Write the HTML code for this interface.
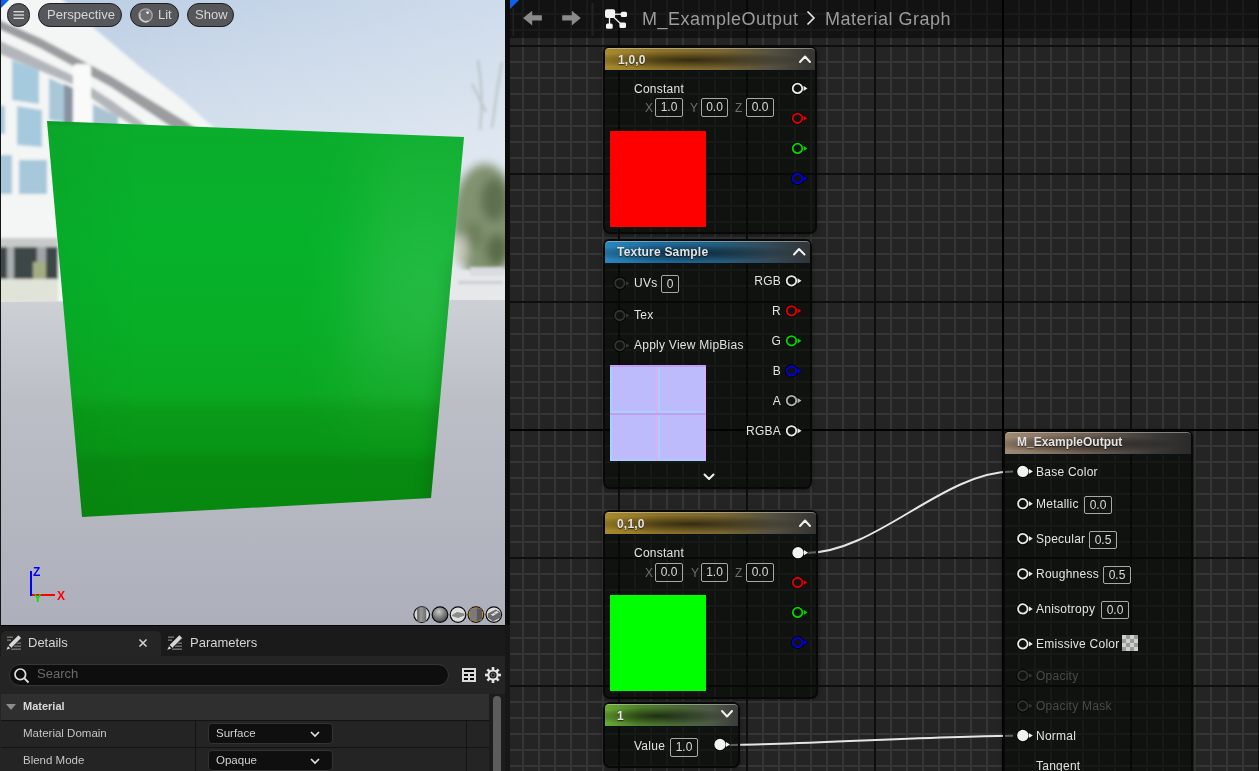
<!DOCTYPE html>
<html><head><meta charset="utf-8">
<style>
*{margin:0;padding:0;box-sizing:border-box}
html,body{width:1259px;height:771px;overflow:hidden;background:#0c0c0c;font-family:"Liberation Sans",sans-serif}
body>*{will-change:transform}
.a{position:absolute}
#vp{position:absolute;left:0;top:0;width:505px;height:625px;overflow:hidden;background:#c9d6e4}
#graph{position:absolute;left:510px;top:0;width:749px;height:771px;overflow:hidden;background-color:#242424;
background-image:
linear-gradient(to right,#0e0e0e 2px,transparent 2px),
linear-gradient(to bottom,#0e0e0e 2px,transparent 2px),
linear-gradient(to right,#353535 2px,transparent 2px),
linear-gradient(to bottom,#353535 2px,transparent 2px);
background-size:128px 771px,749px 128px,16px 771px,749px 16px;
background-position:108px 0,0 45px,12px 0,0 13px;
}
#details{position:absolute;left:0;top:625px;width:510px;height:146px;background:#1a1a1a;overflow:hidden}
#tb{position:absolute;left:0;top:0;width:749px;height:38px;background:rgba(0,0,0,0.5)}
.crumb{position:absolute;top:9px;font-size:18px;letter-spacing:0.5px;color:#9c9c9c;white-space:nowrap}
.pill{position:absolute;top:3px;height:24px;border-radius:12px;background:#56575a;border:1px solid #1e1e1f;color:#d6d6d6;font-size:13px;line-height:22px;white-space:nowrap}
.nd{position:absolute;border-radius:5px;background:rgba(3,7,3,0.6);box-shadow:0 0 0 2px #080808,0 1px 4px 2px rgba(0,0,0,0.35)}
.hd{position:absolute;left:0;right:0;top:0;height:23px;border-radius:4px 4px 0 0;border-bottom:1px solid #08111c;overflow:hidden}
.hd:after{content:"";position:absolute;left:0;top:0;right:0;bottom:0;background:radial-gradient(ellipse 55% 40% at 40% 55%,rgba(0,0,0,0.6),rgba(0,0,0,0) 100%);}
.hd:before{content:"";position:absolute;left:0;top:0;right:0;height:6px;border-radius:4px 4px 0 0;border-top:1.5px solid rgba(225,225,225,0.45);z-index:1}
.ht{position:absolute;top:3px;font-weight:bold;font-size:12px;letter-spacing:0.2px;color:#e4e4e4;z-index:2;white-space:nowrap;text-shadow:0 1px 1px rgba(0,0,0,.6)}
.gold{background:linear-gradient(to right,#a88a2c 0%,#8c7226 25%,#7a6630 55%,#545040 80%,#343432 100%)}
.blue{background:linear-gradient(to right,#2a86bc 0%,#1d6a9a 25%,#235e80 55%,#334a58 80%,#303436 100%)}
.grn{background:linear-gradient(to right,#6aa834 0%,#4e8028 25%,#4a6836 55%,#4e5a46 80%,#3a3c3a 100%)}
.brn{background:linear-gradient(to right,#a08a74 0%,#86735f 25%,#5e544a 55%,#3c3a38 80%,#2a2a2a 100%)}
.t{position:absolute;font-size:12px;letter-spacing:0.25px;color:#e2e2e2;white-space:nowrap}
.bx{position:absolute;border:1px solid #a8a8a8;border-radius:2px;font-size:12px;color:#d8d8d8;text-align:center;line-height:16px}
.gl{position:absolute;font-size:12px;color:#6e6e6e}
</style></head><body>
<div id="vp">
<svg class="a" style="left:0;top:0" width="505" height="625" viewBox="0 0 505 625">
<defs>
 <linearGradient id="sky" x1="0" y1="0" x2="0" y2="1">
  <stop offset="0" stop-color="#b9cce3"/>
  <stop offset="0.45" stop-color="#d0dcea"/>
  <stop offset="1" stop-color="#e3e8ee"/>
 </linearGradient>
 <linearGradient id="skyx" x1="0" y1="0" x2="1" y2="0">
  <stop offset="0" stop-color="#ffffff" stop-opacity="0"/>
  <stop offset="1" stop-color="#ffffff" stop-opacity="0.3"/>
 </linearGradient>
 <linearGradient id="gnd" x1="0" y1="0" x2="0" y2="1">
  <stop offset="0" stop-color="#cdd0d5"/>
  <stop offset="0.3" stop-color="#bcbfc6"/>
  <stop offset="1" stop-color="#adb0bb"/>
 </linearGradient>
 <linearGradient id="grn" gradientUnits="userSpaceOnUse" x1="0" y1="121" x2="0" y2="517">
  <stop offset="0" stop-color="#08a026"/>
  <stop offset="0.015" stop-color="#0aad2c"/>
  <stop offset="0.33" stop-color="#06b22a"/>
  <stop offset="0.53" stop-color="#07ae26"/>
  <stop offset="0.69" stop-color="#0aa821"/>
  <stop offset="0.735" stop-color="#099b18"/>
  <stop offset="0.826" stop-color="#089616"/>
  <stop offset="0.861" stop-color="#078b11"/>
  <stop offset="1" stop-color="#07870f"/>
 </linearGradient>
 <radialGradient id="sheen" gradientUnits="userSpaceOnUse" cx="440" cy="270" r="150" gradientTransform="translate(440 270) scale(0.6 1.3) translate(-440 -270)">
  <stop offset="0" stop-color="#ffffff" stop-opacity="0.09"/>
  <stop offset="0.6" stop-color="#ffffff" stop-opacity="0.05"/>
  <stop offset="1" stop-color="#ffffff" stop-opacity="0"/>
 </radialGradient>
 <linearGradient id="grnx" gradientUnits="userSpaceOnUse" x1="47" y1="0" x2="140" y2="0">
  <stop offset="0" stop-color="#000" stop-opacity="0.04"/>
  <stop offset="1" stop-color="#000" stop-opacity="0"/>
 </linearGradient>
 <filter id="bl" x="-20%" y="-20%" width="140%" height="140%"><feGaussianBlur stdDeviation="1.7"/></filter>
 <linearGradient id="shv" gradientUnits="userSpaceOnUse" x1="0" y1="135" x2="0" y2="450"><stop offset="0" stop-color="#fff" stop-opacity="0.04"/><stop offset="0.55" stop-color="#fff" stop-opacity="0.13"/><stop offset="1" stop-color="#fff" stop-opacity="0"/></linearGradient>
 <filter id="bl4" x="-50%" y="-50%" width="200%" height="200%"><feGaussianBlur stdDeviation="28"/></filter>
 <filter id="bl5" x="-50%" y="-50%" width="200%" height="200%"><feGaussianBlur stdDeviation="7"/></filter>
 <filter id="bl3" x="-50%" y="-50%" width="200%" height="200%"><feGaussianBlur stdDeviation="14"/></filter>
 <filter id="bl2" x="-20%" y="-20%" width="140%" height="140%"><feGaussianBlur stdDeviation="5"/></filter>
</defs>
<rect x="0" y="0" width="505" height="302" fill="url(#sky)"/>
<rect x="0" y="0" width="505" height="302" fill="url(#skyx)"/>
<!-- building -->
<g filter="url(#bl)">
 <polygon points="-10,-10 52,-10 94,28 140,67 183,100 205,120 235,146 235,305 -10,305" fill="#f4f5f5"/>
 <polygon points="-10,16 40,38 111,76 183,120 200,131 180,133 161,120 111,87 40,48 -10,25" fill="#9a9c9f"/>
 <polygon points="-10,36 0,40.7 72,75 111,100 150,128 150,136 111,112 72,84 0,54 -10,49" fill="#b2b6ba"/>
 <polygon points="12,60 39,70 39,104 12,100" fill="#a6cadd"/>
 <polygon points="49,78 64,85 64,122 49,120" fill="#a8c8d8"/>
 <polygon points="64,84 73,88 73,130 64,130" fill="#8793a0"/>
 <rect x="73" y="64" width="18" height="70" rx="4" fill="#fafafa"/>
 <polygon points="93,104 118,116 118,130 93,130" fill="#a9c3d2"/>
 <polygon points="17,106 42,110 42,147 17,145" fill="#a6cadd"/>
 <polygon points="-10,104 5,106 5,134 -10,133" fill="#a6cadd"/>
 <rect x="-10" y="155" width="22" height="39" fill="#a6c8da"/>
 <rect x="19" y="160" width="28" height="34" fill="#a6c8da"/>
 <rect x="-10" y="238" width="68" height="9" fill="#c8cac9"/>
 <rect x="-10" y="247" width="68" height="32" fill="#3c4646"/>
 <rect x="7" y="247" width="7" height="32" fill="#a9aeae"/>
 <rect x="37" y="247" width="9" height="32" fill="#a0a6a6"/>
 <rect x="33" y="262" width="13" height="18" fill="#a4ac84"/>
 <rect x="-10" y="279" width="68" height="24" fill="#dfe3d8"/>
</g>
<!-- trees right -->
<g filter="url(#bl)" opacity="0.3">
 <path d="M480,130 Q484,95 478,60 M492,128 Q496,95 502,62 M486,112 L472,84" stroke="#7f8a7a" stroke-width="2.5" fill="none"/>
</g>
<g filter="url(#bl2)">
 <ellipse cx="485" cy="222" rx="33" ry="58" fill="#809270"/>
 <ellipse cx="494" cy="200" rx="13" ry="22" fill="#5f7050"/>
 <ellipse cx="474" cy="235" rx="9" ry="14" fill="#6e805a"/>
 <ellipse cx="497" cy="250" rx="11" ry="16" fill="#5c6c4a"/>
 <ellipse cx="461" cy="250" rx="7" ry="16" fill="#c2c7b8"/>
</g>
<g filter="url(#bl)">
 <rect x="449" y="270" width="62" height="31" fill="#e6e8ea"/>
 <rect x="470" y="267" width="34" height="9" fill="#d9dce0"/>
 <rect x="458" y="281" width="45" height="3" fill="#c8ccd0"/>
</g>
<!-- ground -->
<path d="M0,302 Q250,299 505,300 L505,625 L0,625 Z" fill="url(#gnd)"/>
<!-- green plane -->
<polygon points="47,121 464,137 431,498 82,517" fill="url(#grn)"/>
<polygon points="47,121 464,137 431,498 82,517" fill="url(#grnx)"/>
<clipPath id="pc"><polygon points="47,121 464,137 431,498 82,517"/></clipPath>
<g clip-path="url(#pc)"><polygon points="370,120 500,120 470,460 345,460" fill="url(#shv)" filter="url(#bl4)"/><polygon points="452,260 475,260 450,520 422,520" fill="#003a00" opacity="0.18" filter="url(#bl5)"/></g>
<!-- axis gizmo -->
<rect x="30" y="571" width="2" height="25" fill="#0000ff"/>
<rect x="32" y="594" width="23" height="2" fill="#ff0000"/>
<text x="33" y="576" font-family="Liberation Sans" font-size="12" font-weight="bold" fill="#0000ff">Z</text>
<text x="57" y="600" font-family="Liberation Sans" font-size="12" font-weight="bold" fill="#ff0000">X</text>
<text x="34" y="602" font-family="Liberation Sans" font-size="11" font-weight="bold" fill="#00e000">Y</text>
</svg>
<div class="a" style="left:0;top:0;width:1px;height:625px;background:#151515"></div>
<div class="pill" style="left:7px;width:23px"></div>
<svg class="a" style="left:12px;top:9px" width="14" height="12" viewBox="0 0 14 12"><g fill="#d8d8d8"><rect x="1.5" y="2" width="10.5" height="1.4"/><rect x="1.5" y="5.3" width="10.5" height="1.4"/><rect x="1.5" y="8.6" width="10.5" height="1.4"/></g></svg>
<div class="pill" style="left:38px;width:84px;padding-left:8px">Perspective</div>
<div class="pill" style="left:130px;width:49px;padding-left:27px">Lit</div>
<svg class="a" style="left:137px;top:7px" width="17" height="17" viewBox="0 0 17 17">
 <circle cx="8.6" cy="8.4" r="6.6" fill="#6e6e6e" stroke="#a8a8a8" stroke-width="1.3"/>
 <path d="M3.2,6.5 A6,6 0 0 0 11.5,14" fill="none" stroke="#d0d0d0" stroke-width="1.4"/>
 <circle cx="10.6" cy="5.6" r="1.4" fill="#e8e8e8"/>
</svg>
<div class="pill" style="left:187px;width:47px;padding-left:7px">Show</div>
<svg class="a" style="left:410px;top:603px" width="95" height="23" viewBox="0 0 95 23">
 <defs>
  <radialGradient id="sph" cx="0.42" cy="0.3" r="0.75"><stop offset="0" stop-color="#c8c8c8"/><stop offset="0.6" stop-color="#777"/><stop offset="1" stop-color="#4a4a4a"/></radialGradient>
  <linearGradient id="cyl" x1="0" x2="1"><stop offset="0" stop-color="#5a5a5a"/><stop offset="0.4" stop-color="#9a9a9a"/><stop offset="1" stop-color="#6a6a6a"/></linearGradient>
 </defs>
 <g transform="translate(11.7 11.6)"><circle r="8.4" fill="#0a0a0a"/><circle r="7.2" fill="#d9d9d9"/><rect x="-4.5" y="-7.2" width="9" height="14.4" fill="url(#cyl)"/></g>
 <g transform="translate(30 11.6)"><circle r="8.4" fill="#0a0a0a"/><circle r="7.2" fill="url(#sph)"/></g>
 <g transform="translate(48 11.6)"><circle r="8.4" fill="#0a0a0a"/><circle r="7.2" fill="#dedede"/><path d="M-6,0.5 L-1,-2.5 L6.5,-1 L6.5,1 L0,3.5 L-6,1.5Z" fill="#8a8a8a"/></g>
 <g transform="translate(65.9 11.6)"><circle r="8.4" fill="#0a0a0a"/><circle r="7.4" fill="#d08a1a"/><circle r="6.2" fill="#4a6a80"/><path d="M-6,-6 L6,-6 L6,6 L-6,6Z" fill="#7a7a7a"/><path d="M1,-6 L1,7 L6,4 L6,-6Z" fill="#5a5a5a"/></g>
 <g transform="translate(83.8 11.6)"><circle r="8.4" fill="#0a0a0a"/><circle r="7.2" fill="#dcdcdc"/><path d="M-6,-1 L2,-5 L7,-2 L7,3 L-1,7 L-6,3Z" fill="#6a6a6a"/><path d="M0,-2 L3,-3.5 L5,-2 L2,-0.5Z M-3,0 L0,-1.5 L2,0 L-1,1.5Z" fill="#ddd"/></g>
</svg>
</div>
<div id="details">
 <div class="a" style="left:505px;top:0;width:5px;height:146px;background:#171717"></div>
 <div class="a" style="left:0;top:0;width:505px;height:1px;background:#050505"></div>
 <div class="a" style="left:1px;top:6px;width:160px;height:25px;background:#252525;border-radius:5px 5px 0 0"></div>
 <div class="a" style="left:0;top:31px;width:505px;height:115px;background:#242424"></div>
 <svg class="a" style="left:5px;top:9px" width="18" height="18" viewBox="0 0 18 18">
  <g fill="#7a7a7a"><rect x="2" y="2.5" width="6" height="1.3"/><rect x="2" y="5.5" width="4" height="1.3"/><rect x="10" y="8.5" width="6" height="1.3"/><rect x="9" y="11.5" width="7" height="1.3"/><rect x="6" y="14.5" width="10" height="1.3"/></g>
  <path d="M13.4,0.8 L16.6,4 L6.4,14.2 L3.2,11 Z" fill="#d8d8d8" stroke="#111" stroke-width="0.9"/>
  <path d="M2.8,11.6 L5.8,14.6 L0.8,16.4 Z" fill="#d8d8d8" stroke="#111" stroke-width="0.7"/>
 </svg>
 <div class="a" style="left:28px;top:10px;font-size:13px;color:#d4d4d4">Details</div>
 <svg class="a" style="left:138px;top:13px" width="10" height="10" viewBox="0 0 10 10"><path d="M1.5,1.5 L8.5,8.5 M8.5,1.5 L1.5,8.5" stroke="#d0d0d0" stroke-width="1.6"/></svg>
 <svg class="a" style="left:166px;top:9px" width="18" height="18" viewBox="0 0 18 18">
  <g fill="#7a7a7a"><rect x="2" y="2.5" width="6" height="1.3"/><rect x="2" y="5.5" width="4" height="1.3"/><rect x="10" y="8.5" width="6" height="1.3"/><rect x="9" y="11.5" width="7" height="1.3"/><rect x="6" y="14.5" width="10" height="1.3"/></g>
  <path d="M13.4,0.8 L16.6,4 L6.4,14.2 L3.2,11 Z" fill="#d8d8d8" stroke="#111" stroke-width="0.9"/>
  <path d="M2.8,11.6 L5.8,14.6 L0.8,16.4 Z" fill="#d8d8d8" stroke="#111" stroke-width="0.7"/>
 </svg>
 <div class="a" style="left:190px;top:10px;font-size:13px;color:#d4d4d4">Parameters</div>
 <div class="a" style="left:9px;top:39px;width:440px;height:22px;border-radius:11px;background:#0e0e0e;border:1px solid #363636"></div>
 <svg class="a" style="left:13px;top:42px" width="18" height="18" viewBox="0 0 18 18"><circle cx="7.3" cy="7.3" r="5.3" fill="none" stroke="#e0e0e0" stroke-width="1.7"/><path d="M11.2,11.2 L15.5,15.5" stroke="#e0e0e0" stroke-width="1.9"/></svg>
 <div class="a" style="left:37px;top:41px;font-size:13px;color:#6a6a6a">Search</div>
 <svg class="a" style="left:461px;top:42px" width="16" height="16" viewBox="0 0 16 16">
  <rect x="1" y="1" width="14" height="14" fill="#dadada"/>
  <g fill="#050505"><rect x="3" y="3" width="10" height="2"/><rect x="3" y="7" width="4" height="2"/><rect x="9" y="7" width="4" height="2"/><rect x="3" y="11" width="4" height="2"/><rect x="9" y="11" width="4" height="2"/></g>
 </svg>
 <svg class="a" style="left:484px;top:41px" width="18" height="18" viewBox="0 0 18 18">
  <g transform="translate(9 9)" fill="#e4e4e4">
   <rect x="-1.3" y="-8" width="2.6" height="16"/><rect x="-1.3" y="-8" width="2.6" height="16" transform="rotate(45)"/><rect x="-1.3" y="-8" width="2.6" height="16" transform="rotate(90)"/><rect x="-1.3" y="-8" width="2.6" height="16" transform="rotate(135)"/>
   <circle r="5.6"/><circle r="3.6" fill="#1a1a1a"/><circle r="2.4" fill="#5a5a5a"/><circle r="1.2" fill="#1a1a1a"/>
  </g>
 </svg>
 <div class="a" style="left:1px;top:69px;width:488px;height:26px;background:#2f2f2f"></div>
 <svg class="a" style="left:5px;top:77px" width="12" height="10" viewBox="0 0 12 10"><path d="M1,2 L11,2 L6,8 Z" fill="#8c8c8c"/></svg>
 <div class="a" style="left:23px;top:75px;font-size:11px;font-weight:bold;color:#d8d8d8">Material</div>
 <div class="a" style="left:1px;top:95px;width:488px;height:1px;background:#131313"></div>
 <div class="a" style="left:1px;top:122px;width:488px;height:1px;background:#131313"></div>
 <div class="a" style="left:195px;top:96px;width:1px;height:60px;background:#131313"></div>
 <div class="a" style="left:466px;top:96px;width:1px;height:60px;background:#131313"></div>
 <div class="a" style="left:23px;top:102px;font-size:11.5px;color:#c4c4c4">Material Domain</div>
 <div class="a" style="left:23px;top:129px;font-size:11.5px;color:#c4c4c4">Blend Mode</div>
 <div class="a" style="left:208px;top:98px;width:125px;height:21px;border-radius:4px;background:#0f0f0f;border:1px solid #333"></div>
 <div class="a" style="left:216px;top:102px;font-size:11.5px;color:#d0d0d0">Surface</div>
 <svg class="a" style="left:309px;top:104px" width="12" height="10" viewBox="0 0 12 10"><path d="M2,3 L6,7 L10,3" fill="none" stroke="#e0e0e0" stroke-width="1.7"/></svg>
 <div class="a" style="left:208px;top:125px;width:125px;height:21px;border-radius:4px;background:#0f0f0f;border:1px solid #333"></div>
 <div class="a" style="left:216px;top:129px;font-size:11.5px;color:#d0d0d0">Opaque</div>
 <svg class="a" style="left:309px;top:131px" width="12" height="10" viewBox="0 0 12 10"><path d="M2,3 L6,7 L10,3" fill="none" stroke="#e0e0e0" stroke-width="1.7"/></svg>
 <div class="a" style="left:489px;top:69px;width:16px;height:77px;background:#1c1c1c"></div>
 <div class="a" style="left:493px;top:71px;width:8px;height:80px;border-radius:4px;background:#5c5c5c"></div>
</div>
<div id="graph">
  <div class="a" style="left:492px;top:0;width:2px;height:771px;background:#000"></div>
  <div class="a" style="left:0;top:429px;width:749px;height:2px;background:#000"></div>
  <div id="tb"></div>
  <div class="crumb" style="left:132px">M_ExampleOutput</div>
  <div class="crumb" style="left:315px">Material Graph</div>
</div>
<svg class="a" style="left:500px;top:0" width="330" height="40" viewBox="500 0 330 40">
 <path d="M510,0 L519,0 L510,9Z" fill="#0d62ec"/>
 <rect x="512.5" y="8" width="1.5" height="28" fill="#222"/>
 <rect x="591.5" y="3" width="2" height="33" fill="#222"/>
 <path d="M523.1,17.9 L532.2,10.7 L532.2,15.3 L541.9,15.3 L541.9,20.4 L532.2,20.4 L532.2,25.5Z" fill="#8a8a8a"/>
 <path d="M580.8,17.9 L571.8,10.7 L571.8,15.3 L562.2,15.3 L562.2,20.4 L571.8,20.4 L571.8,25.5Z" fill="#8a8a8a"/>
 <g stroke="#f0f0f0" stroke-width="1.3"><path d="M614,14.2 L621,14.2"/><path d="M609.5,17 L609.5,24"/><path d="M613,16.5 L621.5,24.5"/></g>
 <g fill="#f4f4f4"><rect x="605" y="9.3" width="10.1" height="8.6" rx="2"/><rect x="620.8" y="11.7" width="6.2" height="5.2" rx="1.5"/><rect x="606" y="23.6" width="6.7" height="5.2" rx="1.5"/><rect x="619.4" y="22.6" width="6.6" height="5.3" rx="1.5"/></g>
 <path d="M807.5,11.5 L814,18 L807.5,24.5" fill="none" stroke="#e8e8e8" stroke-width="1.6"/>
</svg>
<svg class="a" style="left:0;top:0" width="12" height="12"><path d="M1,0 L9,0 L1,8Z" fill="#0d62ec"/></svg>
<svg class="a" style="left:0;top:0" width="1259" height="771">
 <path d="M806 553 C876 553 943 471.5 1013 471.5" fill="none" stroke="#e6e6e6" stroke-width="2"/>
 <path d="M726 745 C796 745 943 735.7 1013 735.7" fill="none" stroke="#e6e6e6" stroke-width="2"/>
</svg>
<!-- node 1,0,0 -->
<div class="nd" style="left:605px;top:48px;width:210px;height:184px">
 <div class="hd gold"></div>
 <div class="ht" style="left:13px;top:5px">1,0,0</div>
 <div class="t" style="left:29px;top:34px">Constant</div>
 <div class="gl" style="left:40px;top:53px">X</div>
 <div class="bx" style="left:50px;top:50px;width:28px;height:19px">1.0</div>
 <div class="gl" style="left:85px;top:53px">Y</div>
 <div class="bx" style="left:96px;top:50px;width:27px;height:19px">0.0</div>
 <div class="gl" style="left:130px;top:53px">Z</div>
 <div class="bx" style="left:141px;top:50px;width:28px;height:19px">0.0</div>
 <div class="a" style="left:5px;top:83px;width:96px;height:96px;background:#ff0000"></div>
</div>
<!-- node texture sample -->
<div class="nd" style="left:605px;top:241px;width:205px;height:246px">
 <div class="hd blue"></div>
 <div class="ht" style="left:12px;top:4px">Texture Sample</div>
 <div class="t" style="left:29px;top:35px">UVs</div>
 <div class="bx" style="left:56px;top:34px;width:18px;height:18px">0</div>
 <div class="t" style="left:29px;top:67px">Tex</div>
 <div class="t" style="left:29px;top:97px">Apply View MipBias</div>
 <div class="t" style="right:29px;top:33px">RGB</div>
 <div class="t" style="right:29px;top:63px">R</div>
 <div class="t" style="right:29px;top:93px">G</div>
 <div class="t" style="right:29px;top:123px">B</div>
 <div class="t" style="right:29px;top:153px">A</div>
 <div class="t" style="right:29px;top:183px">RGBA</div>
 <svg class="a" style="left:5px;top:124px" width="96" height="96" viewBox="0 0 96 96">
  <rect width="96" height="96" fill="#bdbbfb"/>
  <g fill="#a6d2fb"><rect x="0" y="0" width="2" height="96"/><rect x="48" y="0" width="2" height="96"/><rect x="0" y="46" width="96" height="2"/><rect x="0" y="94.4" width="96" height="2"/></g>
  <g fill="#dcaef6"><rect x="46" y="0" width="2" height="96"/><rect x="94.4" y="0" width="2" height="96"/></g>
  <g fill="#c69cf2"><rect x="0" y="0" width="96" height="2"/><rect x="0" y="48" width="96" height="2"/></g>
 </svg>
</div>
<!-- node 0,1,0 -->
<div class="nd" style="left:605px;top:512px;width:211px;height:185px">
 <div class="hd gold"></div>
 <div class="ht" style="left:12px;top:5px">0,1,0</div>
 <div class="t" style="left:29px;top:34px">Constant</div>
 <div class="gl" style="left:40px;top:54px">X</div>
 <div class="bx" style="left:50px;top:51px;width:28px;height:19px">0.0</div>
 <div class="gl" style="left:86px;top:54px">Y</div>
 <div class="bx" style="left:96px;top:51px;width:27px;height:19px">1.0</div>
 <div class="gl" style="left:130px;top:54px">Z</div>
 <div class="bx" style="left:141px;top:51px;width:28px;height:19px">0.0</div>
 <div class="a" style="left:5px;top:83px;width:96px;height:96px;background:#00ff00"></div>
</div>
<!-- node 1 -->
<div class="nd" style="left:605px;top:704px;width:133px;height:62px">
 <div class="hd grn"></div>
 <div class="ht" style="left:12px;top:5px">1</div>
 <div class="t" style="left:29px;top:35px">Value</div>
 <div class="bx" style="left:65px;top:34px;width:28px;height:19px">1.0</div>
</div>
<!-- node M_ExampleOutput -->
<div class="nd" style="left:1005px;top:432px;width:186px;height:400px">
 <div class="hd brn"></div>
 <div class="ht" style="left:12px;top:3px;letter-spacing:0">M_ExampleOutput</div>
 <div class="t" style="left:31px;top:33px">Base Color</div>
 <div class="t" style="left:31px;top:65px">Metallic</div>
 <div class="bx" style="left:79px;top:64px;width:28px;height:18px">0.0</div>
 <div class="t" style="left:31px;top:100px">Specular</div>
 <div class="bx" style="left:84px;top:99px;width:28px;height:18px">0.5</div>
 <div class="t" style="left:31px;top:135px">Roughness</div>
 <div class="bx" style="left:98px;top:134px;width:28px;height:18px">0.5</div>
 <div class="t" style="left:31px;top:170px">Anisotropy</div>
 <div class="bx" style="left:96px;top:169px;width:28px;height:18px">0.0</div>
 <div class="t" style="left:31px;top:205px">Emissive Color</div>
 <div class="a" style="left:117px;top:203px;width:16px;height:16px;background:repeating-conic-gradient(#9a9a9a 0 25%,#d0d0d0 0 50%) 0 0/8px 8px"></div>
 <div class="t" style="left:31px;top:237px;color:#4a4a4a">Opacity</div>
 <div class="t" style="left:31px;top:267px;color:#4a4a4a">Opacity Mask</div>
 <div class="t" style="left:31px;top:297px">Normal</div>
 <div class="t" style="left:31px;top:327px">Tangent</div>
</div>
<svg class="a" style="left:0;top:0" width="1259" height="771">
 <g fill="none" stroke="#f0f0f0" stroke-width="2" stroke-linecap="round" stroke-linejoin="round">
  <polyline points="800,62 805,56.5 810,62"/>
  <polyline points="794,254.5 799,249 804.5,254.5"/>
  <polyline points="800,526 805,520.5 810,526"/>
  <polyline points="722,711 727,716.5 732,711"/>
  <polyline points="704.5,474.5 709,479 713.5,474.5"/>
 </g>
 <g transform="translate(797.5 88.4)"><circle r="6.6" fill="#000" opacity="0.85"/><path d="M5.4,-3.4 L11,0 L5.4,3.4Z" fill="#000"/><circle r="4.75" fill="#111" stroke="#e8e8e8" stroke-width="1.8"/><path d="M6,-2.6 L10.1,0 L6,2.6Z" fill="#e8e8e8"/></g>
 <g transform="translate(797.5 118.3)"><circle r="6.6" fill="#000" opacity="0.85"/><path d="M5.4,-3.4 L11,0 L5.4,3.4Z" fill="#000"/><circle r="4.75" fill="#111" stroke="#e00000" stroke-width="1.8"/><path d="M6,-2.6 L10.1,0 L6,2.6Z" fill="#e00000"/></g>
 <g transform="translate(797.5 148.4)"><circle r="6.6" fill="#000" opacity="0.85"/><path d="M5.4,-3.4 L11,0 L5.4,3.4Z" fill="#000"/><circle r="4.75" fill="#111" stroke="#00d400" stroke-width="1.8"/><path d="M6,-2.6 L10.1,0 L6,2.6Z" fill="#00d400"/></g>
 <g transform="translate(797.5 178.5)"><circle r="6.6" fill="#000" opacity="0.85"/><path d="M5.4,-3.4 L11,0 L5.4,3.4Z" fill="#000"/><circle r="4.75" fill="#111" stroke="#0000e0" stroke-width="1.8"/><path d="M6,-2.6 L10.1,0 L6,2.6Z" fill="#0000e0"/></g>
 <g transform="translate(619.8 283.3)"><circle r="6.6" fill="#000" opacity="0.85"/><path d="M5.4,-3.4 L11,0 L5.4,3.4Z" fill="#000"/><circle r="4.75" fill="#111" stroke="#333" stroke-width="1.8"/><path d="M6,-2.6 L10.1,0 L6,2.6Z" fill="#333"/></g>
 <g transform="translate(619.8 315.5)"><circle r="6.6" fill="#000" opacity="0.85"/><path d="M5.4,-3.4 L11,0 L5.4,3.4Z" fill="#000"/><circle r="4.75" fill="#111" stroke="#333" stroke-width="1.8"/><path d="M6,-2.6 L10.1,0 L6,2.6Z" fill="#333"/></g>
 <g transform="translate(619.8 345.6)"><circle r="6.6" fill="#000" opacity="0.85"/><path d="M5.4,-3.4 L11,0 L5.4,3.4Z" fill="#000"/><circle r="4.75" fill="#111" stroke="#333" stroke-width="1.8"/><path d="M6,-2.6 L10.1,0 L6,2.6Z" fill="#333"/></g>
 <g transform="translate(791.5 280.8)"><circle r="6.6" fill="#000" opacity="0.85"/><path d="M5.4,-3.4 L11,0 L5.4,3.4Z" fill="#000"/><circle r="4.75" fill="#111" stroke="#e8e8e8" stroke-width="1.8"/><path d="M6,-2.6 L10.1,0 L6,2.6Z" fill="#e8e8e8"/></g>
 <g transform="translate(791.5 310.8)"><circle r="6.6" fill="#000" opacity="0.85"/><path d="M5.4,-3.4 L11,0 L5.4,3.4Z" fill="#000"/><circle r="4.75" fill="#111" stroke="#e00000" stroke-width="1.8"/><path d="M6,-2.6 L10.1,0 L6,2.6Z" fill="#e00000"/></g>
 <g transform="translate(791.5 340.8)"><circle r="6.6" fill="#000" opacity="0.85"/><path d="M5.4,-3.4 L11,0 L5.4,3.4Z" fill="#000"/><circle r="4.75" fill="#111" stroke="#00d400" stroke-width="1.8"/><path d="M6,-2.6 L10.1,0 L6,2.6Z" fill="#00d400"/></g>
 <g transform="translate(791.5 370.9)"><circle r="6.6" fill="#000" opacity="0.85"/><path d="M5.4,-3.4 L11,0 L5.4,3.4Z" fill="#000"/><circle r="4.75" fill="#111" stroke="#0000e0" stroke-width="1.8"/><path d="M6,-2.6 L10.1,0 L6,2.6Z" fill="#0000e0"/></g>
 <g transform="translate(791.5 400.6)"><circle r="6.6" fill="#000" opacity="0.85"/><path d="M5.4,-3.4 L11,0 L5.4,3.4Z" fill="#000"/><circle r="4.75" fill="#111" stroke="#b0b0b0" stroke-width="1.8"/><path d="M6,-2.6 L10.1,0 L6,2.6Z" fill="#b0b0b0"/></g>
 <g transform="translate(791.5 430.8)"><circle r="6.6" fill="#000" opacity="0.85"/><path d="M5.4,-3.4 L11,0 L5.4,3.4Z" fill="#000"/><circle r="4.75" fill="#111" stroke="#e8e8e8" stroke-width="1.8"/><path d="M6,-2.6 L10.1,0 L6,2.6Z" fill="#e8e8e8"/></g>
 <g transform="translate(798 552.7)"><circle r="6.6" fill="#000" opacity="0.85"/><path d="M5.4,-3.4 L11,0 L5.4,3.4Z" fill="#000"/><circle r="5.65" fill="#f2f2f2"/><path d="M6,-2.6 L10.1,0 L6,2.6Z" fill="#f2f2f2"/></g>
 <g transform="translate(797.6 582.5)"><circle r="6.6" fill="#000" opacity="0.85"/><path d="M5.4,-3.4 L11,0 L5.4,3.4Z" fill="#000"/><circle r="4.75" fill="#111" stroke="#e00000" stroke-width="1.8"/><path d="M6,-2.6 L10.1,0 L6,2.6Z" fill="#e00000"/></g>
 <g transform="translate(797.6 612.4)"><circle r="6.6" fill="#000" opacity="0.85"/><path d="M5.4,-3.4 L11,0 L5.4,3.4Z" fill="#000"/><circle r="4.75" fill="#111" stroke="#00d400" stroke-width="1.8"/><path d="M6,-2.6 L10.1,0 L6,2.6Z" fill="#00d400"/></g>
 <g transform="translate(797.6 642.5)"><circle r="6.6" fill="#000" opacity="0.85"/><path d="M5.4,-3.4 L11,0 L5.4,3.4Z" fill="#000"/><circle r="4.75" fill="#111" stroke="#0000e0" stroke-width="1.8"/><path d="M6,-2.6 L10.1,0 L6,2.6Z" fill="#0000e0"/></g>
 <g transform="translate(720 744.5)"><circle r="6.6" fill="#000" opacity="0.85"/><path d="M5.4,-3.4 L11,0 L5.4,3.4Z" fill="#000"/><circle r="5.65" fill="#f2f2f2"/><path d="M6,-2.6 L10.1,0 L6,2.6Z" fill="#f2f2f2"/></g>
 <g transform="translate(1022.8 471.4)"><circle r="6.6" fill="#000" opacity="0.85"/><path d="M5.4,-3.4 L11,0 L5.4,3.4Z" fill="#000"/><circle r="5.65" fill="#f2f2f2"/><path d="M6,-2.6 L10.1,0 L6,2.6Z" fill="#f2f2f2"/></g>
 <g transform="translate(1022.8 503.7)"><circle r="6.6" fill="#000" opacity="0.85"/><path d="M5.4,-3.4 L11,0 L5.4,3.4Z" fill="#000"/><circle r="4.75" fill="#111" stroke="#e8e8e8" stroke-width="1.8"/><path d="M6,-2.6 L10.1,0 L6,2.6Z" fill="#e8e8e8"/></g>
 <g transform="translate(1022.8 538.6)"><circle r="6.6" fill="#000" opacity="0.85"/><path d="M5.4,-3.4 L11,0 L5.4,3.4Z" fill="#000"/><circle r="4.75" fill="#111" stroke="#e8e8e8" stroke-width="1.8"/><path d="M6,-2.6 L10.1,0 L6,2.6Z" fill="#e8e8e8"/></g>
 <g transform="translate(1022.8 573.8)"><circle r="6.6" fill="#000" opacity="0.85"/><path d="M5.4,-3.4 L11,0 L5.4,3.4Z" fill="#000"/><circle r="4.75" fill="#111" stroke="#e8e8e8" stroke-width="1.8"/><path d="M6,-2.6 L10.1,0 L6,2.6Z" fill="#e8e8e8"/></g>
 <g transform="translate(1022.8 608.9)"><circle r="6.6" fill="#000" opacity="0.85"/><path d="M5.4,-3.4 L11,0 L5.4,3.4Z" fill="#000"/><circle r="4.75" fill="#111" stroke="#e8e8e8" stroke-width="1.8"/><path d="M6,-2.6 L10.1,0 L6,2.6Z" fill="#e8e8e8"/></g>
 <g transform="translate(1022.8 643.9)"><circle r="6.6" fill="#000" opacity="0.85"/><path d="M5.4,-3.4 L11,0 L5.4,3.4Z" fill="#000"/><circle r="4.75" fill="#111" stroke="#e8e8e8" stroke-width="1.8"/><path d="M6,-2.6 L10.1,0 L6,2.6Z" fill="#e8e8e8"/></g>
 <g transform="translate(1022.8 675.6)"><circle r="6.6" fill="#000" opacity="0.85"/><path d="M5.4,-3.4 L11,0 L5.4,3.4Z" fill="#000"/><circle r="4.75" fill="#111" stroke="#333" stroke-width="1.8"/><path d="M6,-2.6 L10.1,0 L6,2.6Z" fill="#333"/></g>
 <g transform="translate(1022.8 705.8)"><circle r="6.6" fill="#000" opacity="0.85"/><path d="M5.4,-3.4 L11,0 L5.4,3.4Z" fill="#000"/><circle r="4.75" fill="#111" stroke="#333" stroke-width="1.8"/><path d="M6,-2.6 L10.1,0 L6,2.6Z" fill="#333"/></g>
 <g transform="translate(1022.8 735.5)"><circle r="6.6" fill="#000" opacity="0.85"/><path d="M5.4,-3.4 L11,0 L5.4,3.4Z" fill="#000"/><circle r="5.65" fill="#f2f2f2"/><path d="M6,-2.6 L10.1,0 L6,2.6Z" fill="#f2f2f2"/></g>
</svg>
</body></html>
